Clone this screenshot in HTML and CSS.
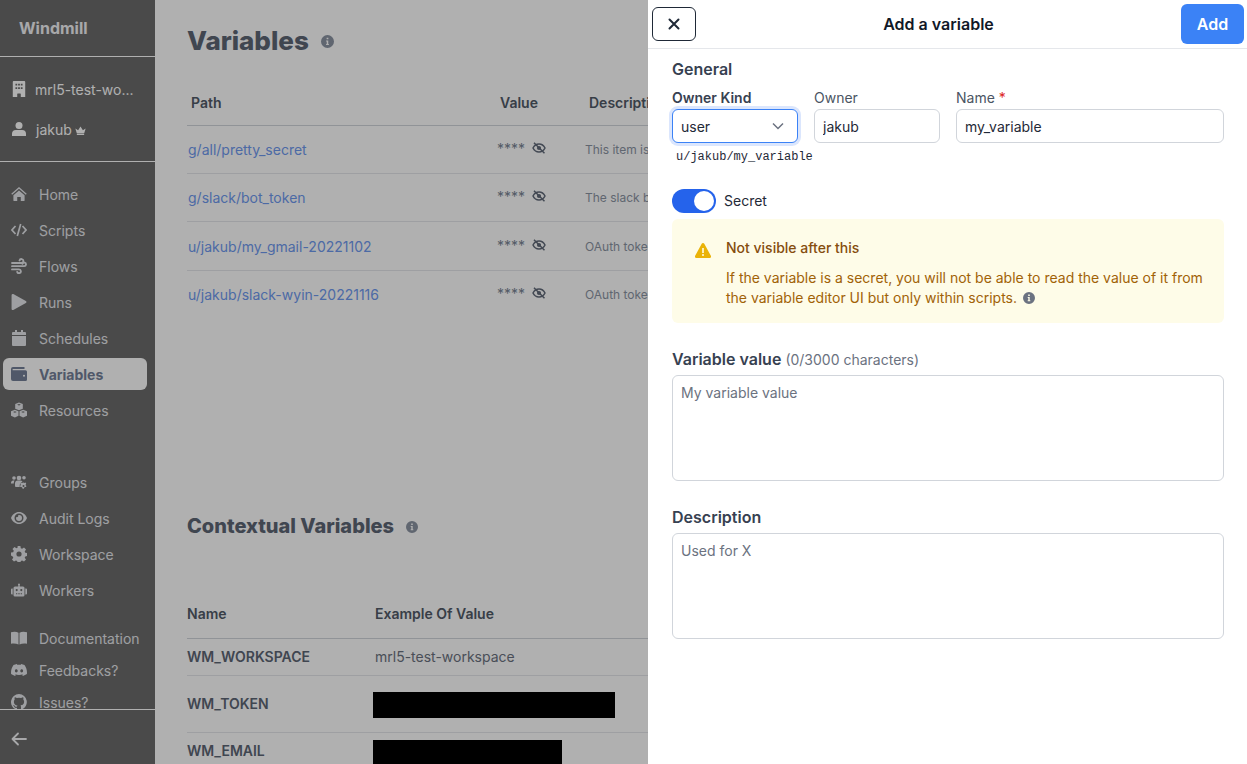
FILE: index.html
```html
<!DOCTYPE html>
<html lang="en">
<head>
    <meta charset="UTF-8">
    <meta name="viewport" content="width=device-width, initial-scale=1.0">
    <title>Variables | Windmill</title>
    <link rel="stylesheet" href="styles.css">
</head>
<body>

    <svg class="sprite" xmlns="http://www.w3.org/2000/svg">
        <symbol id="i-building" viewBox="0 0 14 18"><path fill-rule="evenodd" d="M1 0h12a1 1 0 0 1 1 1v17H9v-3.500a.5.5 0 0 0-.5-.5h-3a.5.5 0 0 0-.5.500V18H0V1a1 1 0 0 1 1-1zM3 3v2h2V3zm3 0v2h2V3zm3 0v2h2V3zM3 7v2h2V7zm3 0v2h2V7zm3 0v2h2V7z"/></symbol>
        <symbol id="i-user" viewBox="0 0 16 16"><circle cx="8" cy="4" r="4"/><path d="M4.500 9h7A4.500 4.500 0 0 1 16 13.500V16H0v-2.500A4.500 4.500 0 0 1 4.500 9z"/></symbol>
        <symbol id="i-crown" viewBox="0 0 16 13"><path d="M2.500 10 .5 3.500l4 2.500L8 .5 11.500 6l4-2.500-2 6.500zM2.700 11h10.600v2H2.700z"/></symbol>
        <symbol id="i-home" viewBox="0 0 18 16"><path d="M9 0 .3 7.600 1.300 8.800 9 2.200l7.700 6.600 1-1.200zM2.700 9.400 9 4l6.300 5.400V15a1 1 0 0 1-1 1H11v-4.500H7V16H3.700a1 1 0 0 1-1-1z"/></symbol>
        <symbol id="i-code" viewBox="0 0 16 14"><path fill="none" stroke="currentColor" stroke-width="1.700" d="M4.500 3 1 7l3.500 4M11.500 3 15 7l-3.500 4M9.700 1 6.300 13"/></symbol>
        <symbol id="i-wind" viewBox="0 0 16 16"><path fill="none" stroke="currentColor" stroke-width="1.800" stroke-linecap="round" d="M1 5h9.500a2 2 0 1 0-2-2.500M1 8.200h12.200a1.800 1.800 0 1 0-1.700-2.400M1 11.400h7a1.900 1.900 0 1 1-1.800 2.500"/></symbol>
        <symbol id="i-play" viewBox="0 0 13 14"><path d="M1 0a1 1 0 0 0-1 1v12a1 1 0 0 0 1.500.900l11-6a1 1 0 0 0 0-1.800l-11-6A1 1 0 0 0 1 0z"/></symbol>
        <symbol id="i-calendar" viewBox="0 0 14 16"><path d="M3 0h2v2h4V0h2v2h2a1 1 0 0 1 1 1v2H0V3a1 1 0 0 1 1-1h2zM0 6h14v9a1 1 0 0 1-1 1H1a1 1 0 0 1-1-1z"/></symbol>
        <symbol id="i-wallet" viewBox="0 0 16 14"><path fill-rule="evenodd" d="M2 0h11.500v2H2a.7.7 0 0 0 0 1.300h12.500A1.500 1.500 0 0 1 16 4.800v7.700a1.500 1.500 0 0 1-1.500 1.500H2a2 2 0 0 1-2-2V2a2 2 0 0 1 2-2zm11 7.700a1 1 0 1 0 0 2 1 1 0 0 0 0-2z"/></symbol>
        <symbol id="i-cubes" viewBox="0 0 16 15"><path fill-rule="evenodd" d="M8 0l3.800 1.500v4.700L8 7.800 4.200 6.200V1.500zM3.900 7.200 7.500 8.700v4.600L3.900 15 0 13.300V8.700zm8.200 0L16 8.700v4.600L12.100 15l-3.600-1.700V8.700zM3.900 8.700 2 9.500l1.900.8 1.900-.8zm8.200 0-1.900.8 1.900.8 1.900-.8zM8 1.500 6.100 2.300 8 3.100l1.900-.8z"/></symbol>
        <symbol id="i-groups" viewBox="0 0 16 14"><circle cx="3" cy="3" r="1.800"/><circle cx="8" cy="3" r="2.300"/><circle cx="13" cy="2.800" r="1.800"/><path d="M0 8c0-1.500 1-2.500 2.200-2.500h1.500C3 6.200 2.800 7 2.800 8.500H0zM4 8.500c0-1.700 1.200-3 2.500-3h3c.8 0 1.500.5 2 1.200-1.500.3-2.800 1.800-2.800 3.800v1.500H5a1 1 0 0 1-1-1z"/><path fill-rule="evenodd" d="M12.500 7.500l1 .4.900-.3.800 1-.5.800.1 1 .7.600-.6 1.100-1-.1-.8.700-.3 1h-1.200l-.3-1-.8-.7-1 .1-.6-1.100.7-.6.100-1-.5-.8.800-1 .9.300zm0 2.400a1 1 0 1 0 0 2 1 1 0 0 0 0-2z"/></symbol>
        <symbol id="i-eye" viewBox="0 0 16 12"><path fill-rule="evenodd" d="M8 0c3.600 0 6.600 2.400 8 6-1.400 3.600-4.400 6-8 6S1.400 9.600 0 6c1.400-3.600 4.400-6 8-6zm0 1.500a4.500 4.500 0 1 0 0 9 4.500 4.500 0 0 0 0-9zM8 3a3 3 0 1 1-3 3c0-.4.100-.7.200-1a1.500 1.500 0 0 0 2-2c.3-.1.500 0 .8 0z"/></symbol>
        <symbol id="i-cog" viewBox="0 0 16 16"><path fill-rule="evenodd" d="M6.600 0h2.800l.4 2.200 1.300.6 1.900-1.200 2 2-1.300 1.800.6 1.400 2.200.4v2.800l-2.200.4-.6 1.400 1.300 1.800-2 2-1.900-1.200-1.300.6-.4 2.200H6.600l-.4-2.200-1.300-.6-1.900 1.200-2-2 1.300-1.800-.6-1.400L0 9.400V6.600l2.200-.4.6-1.400-1.300-1.800 2-2 1.900 1.200 1.300-.6zM8 5.400a2.600 2.600 0 1 0 0 5.200 2.600 2.600 0 0 0 0-5.200z"/></symbol>
        <symbol id="i-robot" viewBox="0 0 16 13"><path fill-rule="evenodd" d="M8 0a1 1 0 0 1 .7 1.700V3h3.300A1.500 1.500 0 0 1 13.500 4.500v7A1.500 1.500 0 0 1 12 13H4a1.500 1.500 0 0 1-1.500-1.500v-7A1.500 1.500 0 0 1 4 3h3.300V1.700A1 1 0 0 1 8 0zM5.700 5.500a1.100 1.100 0 1 0 0 2.200 1.100 1.100 0 0 0 0-2.200zm4.600 0a1.100 1.100 0 1 0 0 2.200 1.100 1.100 0 0 0 0-2.200zM5 9.700v1h1.300v-1zm2.300 0v1h1.400v-1zm2.400 0v1H11v-1z"/><path d="M0 6a1 1 0 0 1 1-1h.7v6H1a1 1 0 0 1-1-1zM14.300 5h.7a1 1 0 0 1 1 1v4a1 1 0 0 1-1 1h-.7z"/></symbol>
        <symbol id="i-book" viewBox="0 0 16 13"><path d="M0 .8C2.500 0 5.500 0 7.500 1.200V13C5.500 12 2.500 11.800 0 12.300zM16 .8C13.500 0 10.500 0 8.500 1.200V13c2-1 5-1.200 7.500-.7z"/></symbol>
        <symbol id="i-discord" viewBox="0 0 16 12"><path fill-rule="evenodd" d="M13.500 1A13 13 0 0 0 10.200 0l-.4.800a12 12 0 0 0-3.600 0L5.800 0a13 13 0 0 0-3.300 1C.4 4.100-.2 7.100.1 10.100A13 13 0 0 0 4.100 12l.8-1.300-1.300-.6.300-.2a9.500 9.500 0 0 0 8.200 0l.3.200-1.300.6.800 1.300a13 13 0 0 0 4-1.900c.4-3.500-.6-6.500-2.400-9.100zM5.300 5.200c.8 0 1.500.7 1.400 1.600 0 .9-.6 1.600-1.400 1.600s-1.400-.7-1.400-1.600.6-1.600 1.400-1.600zm5.400 0c.8 0 1.400.7 1.400 1.600s-.6 1.600-1.400 1.600-1.400-.7-1.400-1.600.6-1.600 1.400-1.600z"/></symbol>
        <symbol id="i-github" viewBox="0 0 16 16"><path d="M8 0a8 8 0 0 0-2.500 15.600c.4.100.5-.2.500-.4v-1.400c-2.200.5-2.700-1-2.700-1-.4-.9-.9-1.200-.9-1.200-.7-.5.100-.5.100-.5.800.1 1.200.8 1.200.8.700 1.200 1.900.9 2.300.7.100-.5.300-.9.500-1.100-1.800-.2-3.600-.9-3.600-4 0-.9.300-1.600.8-2.100-.1-.2-.4-1 .1-2.100 0 0 .7-.2 2.200.8a7.600 7.600 0 0 1 4 0c1.500-1 2.200-.8 2.200-.8.400 1.100.2 1.900.1 2.100.5.600.8 1.300.8 2.100 0 3.100-1.900 3.700-3.600 3.900.3.300.5.700.5 1.500v2.200c0 .2.100.5.600.4A8 8 0 0 0 8 0z"/></symbol>
        <symbol id="i-back" viewBox="0 0 16 14"><path fill="none" stroke="currentColor" stroke-width="1.800" stroke-linecap="round" stroke-linejoin="round" d="M15 7H1.500M7 1.500 1.500 7 7 12.500"/></symbol>
        <symbol id="i-info" viewBox="0 0 12 12"><path fill-rule="evenodd" d="M6 0a6 6 0 1 1 0 12A6 6 0 0 1 6 0zm-.8 2.500v1.500h1.600V2.500zM4.700 5v1h.6v2.200h-.6v1.100h2.600V8.200h-.6V5z"/></symbol>
        <symbol id="i-eye-off" viewBox="0 0 14 12"><path fill="none" stroke="currentColor" stroke-width="1.500" d="M1 6c1.300-2.600 3.400-4 6-4s4.700 1.400 6 4c-1.300 2.600-3.400 4-6 4S2.300 8.600 1 6z"/><circle cx="7" cy="6" r="2.100"/><path fill="none" stroke="currentColor" stroke-width="1.500" d="M2 .7 12.500 11.300"/></symbol>
    </svg>

    <div class="app">
        <aside class="sidebar">
            <div class="brand">Windmill</div>

            <div class="account">
                <div class="account-row">
                    <svg class="account-icon"><use href="#i-building"/></svg>
                    <span class="workspace-name">mrl5-test-wo...</span>
                </div>
                <div class="account-row">
                    <svg class="account-icon"><use href="#i-user"/></svg>
                    <span>jakub</span>
                    <svg class="crown"><use href="#i-crown"/></svg>
                </div>
            </div>

            <nav class="nav">
                <div class="nav-group">
                    <a class="nav-item"><svg><use href="#i-home"/></svg>Home</a>
                    <a class="nav-item"><svg><use href="#i-code"/></svg>Scripts</a>
                    <a class="nav-item"><svg><use href="#i-wind"/></svg>Flows</a>
                    <a class="nav-item"><svg><use href="#i-play"/></svg>Runs</a>
                    <a class="nav-item"><svg><use href="#i-calendar"/></svg>Schedules</a>
                    <a class="nav-item active"><svg><use href="#i-wallet"/></svg>Variables</a>
                    <a class="nav-item"><svg><use href="#i-cubes"/></svg>Resources</a>
                </div>
                <div class="nav-group second">
                    <a class="nav-item"><svg><use href="#i-groups"/></svg>Groups</a>
                    <a class="nav-item"><svg><use href="#i-eye"/></svg>Audit Logs</a>
                    <a class="nav-item"><svg><use href="#i-cog"/></svg>Workspace</a>
                    <a class="nav-item"><svg><use href="#i-robot"/></svg>Workers</a>
                </div>
                <div class="nav-group third">
                    <a class="nav-item"><svg><use href="#i-book"/></svg>Documentation</a>
                    <a class="nav-item"><svg><use href="#i-discord"/></svg>Feedbacks?</a>
                    <a class="nav-item"><svg><use href="#i-github"/></svg>Issues?</a>
                </div>
            </nav>

            <div class="sidebar-foot">
                <svg class="back"><use href="#i-back"/></svg>
            </div>
        </aside>

        <main class="main">
            <h1 class="page-title">Variables <svg class="info"><use href="#i-info"/></svg></h1>

            <table class="vars">
                <colgroup><col class="col-path"><col class="col-value"><col class="col-desc"></colgroup>
                <thead>
                    <tr><th>Path</th><th>Value</th><th>Description</th></tr>
                </thead>
                <tbody>
                    <tr>
                        <td><a class="var-link">g/all/pretty_secret</a></td>
                        <td><span class="stars">****</span><svg class="eye-off"><use href="#i-eye-off"/></svg></td>
                        <td class="desc">This item is a secret</td>
                    </tr>
                    <tr>
                        <td><a class="var-link">g/slack/bot_token</a></td>
                        <td><span class="stars">****</span><svg class="eye-off"><use href="#i-eye-off"/></svg></td>
                        <td class="desc">The slack bot token</td>
                    </tr>
                    <tr class="row-tall">
                        <td><a class="var-link">u/jakub/my_gmail-20221102</a></td>
                        <td><span class="stars">****</span><svg class="eye-off"><use href="#i-eye-off"/></svg></td>
                        <td class="desc">OAuth token</td>
                    </tr>
                    <tr>
                        <td><a class="var-link">u/jakub/slack-wyin-20221116</a></td>
                        <td><span class="stars">****</span><svg class="eye-off"><use href="#i-eye-off"/></svg></td>
                        <td class="desc">OAuth token</td>
                    </tr>
                </tbody>
            </table>

            <h2 class="section-title">Contextual Variables <svg class="info small"><use href="#i-info"/></svg></h2>

            <table class="context">
                <colgroup><col class="col-name"><col></colgroup>
                <thead>
                    <tr><th>Name</th><th>Example Of Value</th></tr>
                </thead>
                <tbody>
                    <tr class="row-text"><td class="ctx-name">WM_WORKSPACE</td><td>mrl5-test-workspace</td></tr>
                    <tr class="row-token"><td class="ctx-name">WM_TOKEN</td><td><div class="redacted"></div></td></tr>
                    <tr class="row-email"><td class="ctx-name">WM_EMAIL</td><td><div class="redacted short"></div></td></tr>
                </tbody>
            </table>
        </main>

        <div class="overlay"></div>

        <section class="drawer">
            <header class="drawer-head">
                <button class="btn-close" type="button">
                    <svg width="12" height="12" viewBox="0 0 12 12"><path fill="none" stroke="currentColor" stroke-width="2" stroke-linecap="round" d="M1.500 1.500l9 9M10.500 1.500l-9 9"/></svg>
                </button>
                <div class="drawer-title">Add a variable</div>
                <button class="btn-add" type="button">Add</button>
            </header>

            <div class="drawer-body">
                <div class="form-heading">General</div>

                <div class="owner-row">
                    <div class="field">
                        <label class="strong">Owner Kind</label>
                        <div class="select-box">
                            <span>user</span>
                            <svg width="12" height="8" viewBox="0 0 12 8"><path fill="none" stroke="#6b7280" stroke-width="1.500" d="M1 1.500l5 5 5-5"/></svg>
                        </div>
                    </div>
                    <div class="field">
                        <label>Owner</label>
                        <input class="text-input" type="text" value="jakub">
                    </div>
                    <div class="field grow">
                        <label>Name <span class="req">*</span></label>
                        <input class="text-input" type="text" value="my_variable">
                    </div>
                </div>
                <div class="full-path">u/jakub/my_variable</div>

                <div class="toggle-row">
                    <div class="toggle"><div class="knob"></div></div>
                    <span class="toggle-label">Secret</span>
                </div>

                <div class="alert">
                    <svg class="alert-icon" viewBox="0 0 16 15"><path fill="#eab308" fill-rule="evenodd" d="M6.700.8a1.500 1.500 0 0 1 2.600 0l6.400 11.700A1.500 1.500 0 0 1 14.400 15H1.600a1.500 1.500 0 0 1-1.300-2.500zM7.200 5v5h1.600V5zM8 11a1 1 0 1 0 0 2 1 1 0 0 0 0-2z"/></svg>
                    <div>
                        <div class="alert-title">Not visible after this</div>
                        <p class="alert-text">If the variable is a secret, you will not be able to read the value of it from the variable editor UI but only within scripts. <svg class="info tiny"><use href="#i-info"/></svg></p>
                    </div>
                </div>

                <div class="form-heading value-heading">Variable value <span class="hint">(0/3000 characters)</span></div>
                <textarea class="area value-area" placeholder="My variable value"></textarea>

                <div class="form-heading desc-heading">Description</div>
                <textarea class="area" placeholder="Used for X"></textarea>
            </div>
        </section>
    </div>

</body>
</html>
```

FILE: styles.css
```css
* {
    box-sizing: border-box;
}

body {
    margin: 0;
    font-family: 'Inter', 'Liberation Sans', sans-serif;
    font-size: 14px;
    color: #1f2937;
    background-color: #ffffff;
    overflow: hidden;
}

.sprite {
    display: none;
}

svg {
    fill: currentColor;
    flex-shrink: 0;
}

.app {
    position: relative;
    display: flex;
    height: 100vh;
    overflow: hidden;
}

/* Sidebar */
.sidebar {
    width: 155px;
    flex-shrink: 0;
    display: flex;
    flex-direction: column;
    background-color: #6c6c6c;
    color: #f3f4f6;
}

.brand {
    height: 57px;
    padding: 19px 0 0 19px;
    font-size: 16px;
    line-height: 18px;
    font-weight: 700;
    border-bottom: 1px solid #ffffff;
}

.account {
    height: 105px;
    padding-top: 12px;
    border-bottom: 1px solid #ffffff;
}

.account-row {
    height: 40px;
    display: flex;
    align-items: center;
    padding-left: 12px;
    color: #ffffff;
    white-space: nowrap;
}

.account-row span {
    margin-left: 10px;
}

.account-row .workspace-name {
    margin-left: 9px;
}

.account-icon {
    width: 14px;
    height: 16px;
}

.crown {
    width: 11px;
    height: 9px;
    margin-left: 3px;
    margin-top: 2px;
}

.nav {
    flex: 1;
    min-height: 0;
    padding: 16px 8px 0 3px;
    overflow: hidden;
}

.nav-group {
    display: flex;
    flex-direction: column;
    gap: 4px;
}

.nav-group.second {
    margin-top: 40px;
}

.nav-group.third {
    margin-top: 16px;
    gap: 0;
}

.nav-item {
    height: 32px;
    flex-shrink: 0;
    display: flex;
    align-items: center;
    gap: 12px;
    padding-left: 8px;
    border-radius: 6px;
    color: #e5e7eb;
    white-space: nowrap;
}

.nav-item svg {
    width: 16px;
    height: 16px;
}

.nav-item.active {
    background-color: #ffffff;
    color: #748099;
    font-weight: 700;
}

.sidebar-foot {
    height: 55px;
    display: flex;
    align-items: center;
    padding: 4px 0 0 11px;
    border-top: 1px solid #ffffff;
}

.back {
    width: 16px;
    height: 14px;
}

/* Page behind the drawer */
.main {
    flex: 1;
    min-width: 0;
    padding: 0 0 0 32px;
}

.page-title {
    margin: 0;
    height: 87px;
    padding-top: 23px;
    font-size: 26px;
    line-height: 36px;
    font-weight: 800;
    color: #5d6675;
    display: flex;
    align-items: flex-start;
    gap: 4px;
}

.info {
    width: 13px;
    height: 13px;
    color: #8b94a3;
}

.page-title .info {
    margin: 12px 0 0 8px;
}

.vars,
.context {
    border-collapse: collapse;
    table-layout: fixed;
    width: 900px;
}

.col-path {
    width: 309px;
}

.col-value {
    width: 89px;
}

.vars th,
.context th {
    text-align: left;
    font-weight: 600;
    color: #515a68;
}

.vars th {
    height: 38px;
    padding: 2px 4px 8px;
    border-bottom: 1px solid #d1d5db;
}

.vars td {
    height: 48px;
    padding: 0 1px;
    border-bottom: 1px solid #e5e7eb;
}

.vars .row-tall td {
    height: 49px;
    padding-top: 1px;
}

.vars tbody tr:last-child td {
    border-bottom: none;
}

.var-link {
    color: #6f9af0;
}

.stars {
    color: #7a8494;
    font-size: 14px;
    margin-right: 7px;
    vertical-align: 2px;
}

.eye-off {
    width: 14px;
    height: 12px;
    color: #616a79;
    vertical-align: 2px;
}

.vars .desc {
    padding-left: 0;
    padding-top: 1px;
    font-size: 12px;
    color: #8b94a3;
    white-space: nowrap;
}

.section-title {
    margin: 0;
    height: 84px;
    padding-top: 194px;
    box-sizing: content-box;
    font-size: 20px;
    line-height: 28px;
    font-weight: 800;
    color: #5d6675;
    display: flex;
    align-items: flex-start;
    gap: 4px;
}

.info.small {
    margin: 9px 0 0 8px;
    width: 12px;
    height: 12px;
}

.col-name {
    width: 188px;
}

.context th {
    height: 42px;
    padding: 2px 0 8px;
    border-bottom: 1px solid #d1d5db;
}

.context td {
    padding: 0;
    border-bottom: 1px solid #e5e7eb;
    color: #6b7280;
}

.context .ctx-name {
    font-weight: 600;
    color: #5d6675;
}

.row-text td {
    height: 37px;
}

.row-token td {
    height: 57px;
}

.row-token .redacted {
    margin-top: 2px;
}

.context .row-email td {
    vertical-align: top;
    padding-top: 7px;
    border-bottom: none;
}

.context .row-email .ctx-name {
    padding-top: 9px;
}

.redacted {
    width: 242px;
    height: 26px;
    margin-left: -2px;
    background-color: #000000;
}

.redacted.short {
    width: 189px;
}

.overlay {
    position: absolute;
    inset: 0;
    background-color: rgba(0, 0, 0, 0.31);
}

/* Drawer */
.drawer {
    position: absolute;
    top: 0;
    right: 0;
    bottom: 0;
    width: 599px;
    background-color: #ffffff;
}

.drawer-head {
    height: 49px;
    display: flex;
    align-items: center;
    justify-content: space-between;
    padding: 0 3px 1px 4px;
    border-bottom: 1px solid #e5e7eb;
}

.btn-close {
    width: 44px;
    height: 34px;
    display: flex;
    align-items: center;
    justify-content: center;
    padding: 0;
    background-color: #ffffff;
    border: 1px solid #1f2937;
    border-radius: 6px;
    color: #1f2937;
}

.drawer-title {
    font-size: 16px;
    font-weight: 600;
    color: #111827;
}

.btn-add {
    width: 63px;
    height: 40px;
    padding: 0;
    border: none;
    border-radius: 6px;
    background-color: #3b82f6;
    color: #ffffff;
    font-family: inherit;
    font-size: 16px;
    font-weight: 600;
}

.drawer-body {
    padding: 10px 23px 0 24px;
}

.form-heading {
    font-size: 16px;
    line-height: 20px;
    font-weight: 600;
    color: #374151;
}

.owner-row {
    display: flex;
    gap: 16px;
    margin-top: 9px;
}

.field {
    width: 126px;
    flex-shrink: 0;
}

.field.grow {
    flex: 1;
}

.field label {
    display: block;
    height: 21px;
    line-height: 20px;
    color: #4b5563;
}

.field label.strong {
    font-weight: 600;
    color: #374151;
}

.req {
    color: #dc2626;
}

.text-input,
.select-box {
    display: flex;
    align-items: center;
    width: 100%;
    height: 34px;
    padding: 0 8px;
    border: 1px solid #d1d5db;
    border-radius: 6px;
    background-color: #ffffff;
    font-family: inherit;
    font-size: 14px;
    color: #1f2937;
}

.select-box {
    justify-content: space-between;
    padding-right: 13px;
    border-color: #3b82f6;
    box-shadow: 0 0 0 3px #dbe6fd;
}

.full-path {
    margin: 7px 0 0 4px;
    font-family: 'Liberation Mono', monospace;
    font-size: 12px;
    line-height: 14px;
    color: #1f2937;
}

.toggle-row {
    display: flex;
    align-items: center;
    gap: 8px;
    margin-top: 25px;
    color: #1f2937;
}

.toggle {
    width: 44px;
    height: 24px;
    padding: 2px;
    display: flex;
    justify-content: flex-end;
    background-color: #2563eb;
    border-radius: 12px;
}

.knob {
    width: 20px;
    height: 20px;
    background-color: #ffffff;
    border-radius: 50%;
}

.toggle-label {
    margin-bottom: 2px;
}

.alert {
    display: flex;
    gap: 15px;
    height: 104px;
    margin-top: 6px;
    padding: 19px 16px 0 23px;
    background-color: #fefce8;
    border-radius: 6px;
}

.alert-icon {
    width: 16px;
    height: 15px;
    margin-top: 5px;
}

.alert-title {
    line-height: 20px;
    font-weight: 500;
    color: #854d0e;
}

.alert-text {
    margin: 10px 0 0;
    line-height: 20px;
    color: #a16207;
}

.info.tiny {
    width: 12px;
    height: 12px;
    margin-left: 2px;
    vertical-align: -1px;
    color: #6b7280;
}

.value-heading {
    margin-top: 26px;
}

.hint {
    font-size: 14px;
    font-weight: 400;
    color: #6b7280;
}

.desc-heading {
    margin-top: 26px;
}

.area {
    display: block;
    width: 100%;
    height: 106px;
    margin-top: 6px;
    padding: 7px 8px;
    border: 1px solid #d1d5db;
    border-radius: 6px;
    resize: none;
    font-family: inherit;
    font-size: 14px;
    line-height: 20px;
}

.area.value-area {
    margin-top: 5px;
}

.area::placeholder {
    color: #6b7280;
    opacity: 1;
}
```
